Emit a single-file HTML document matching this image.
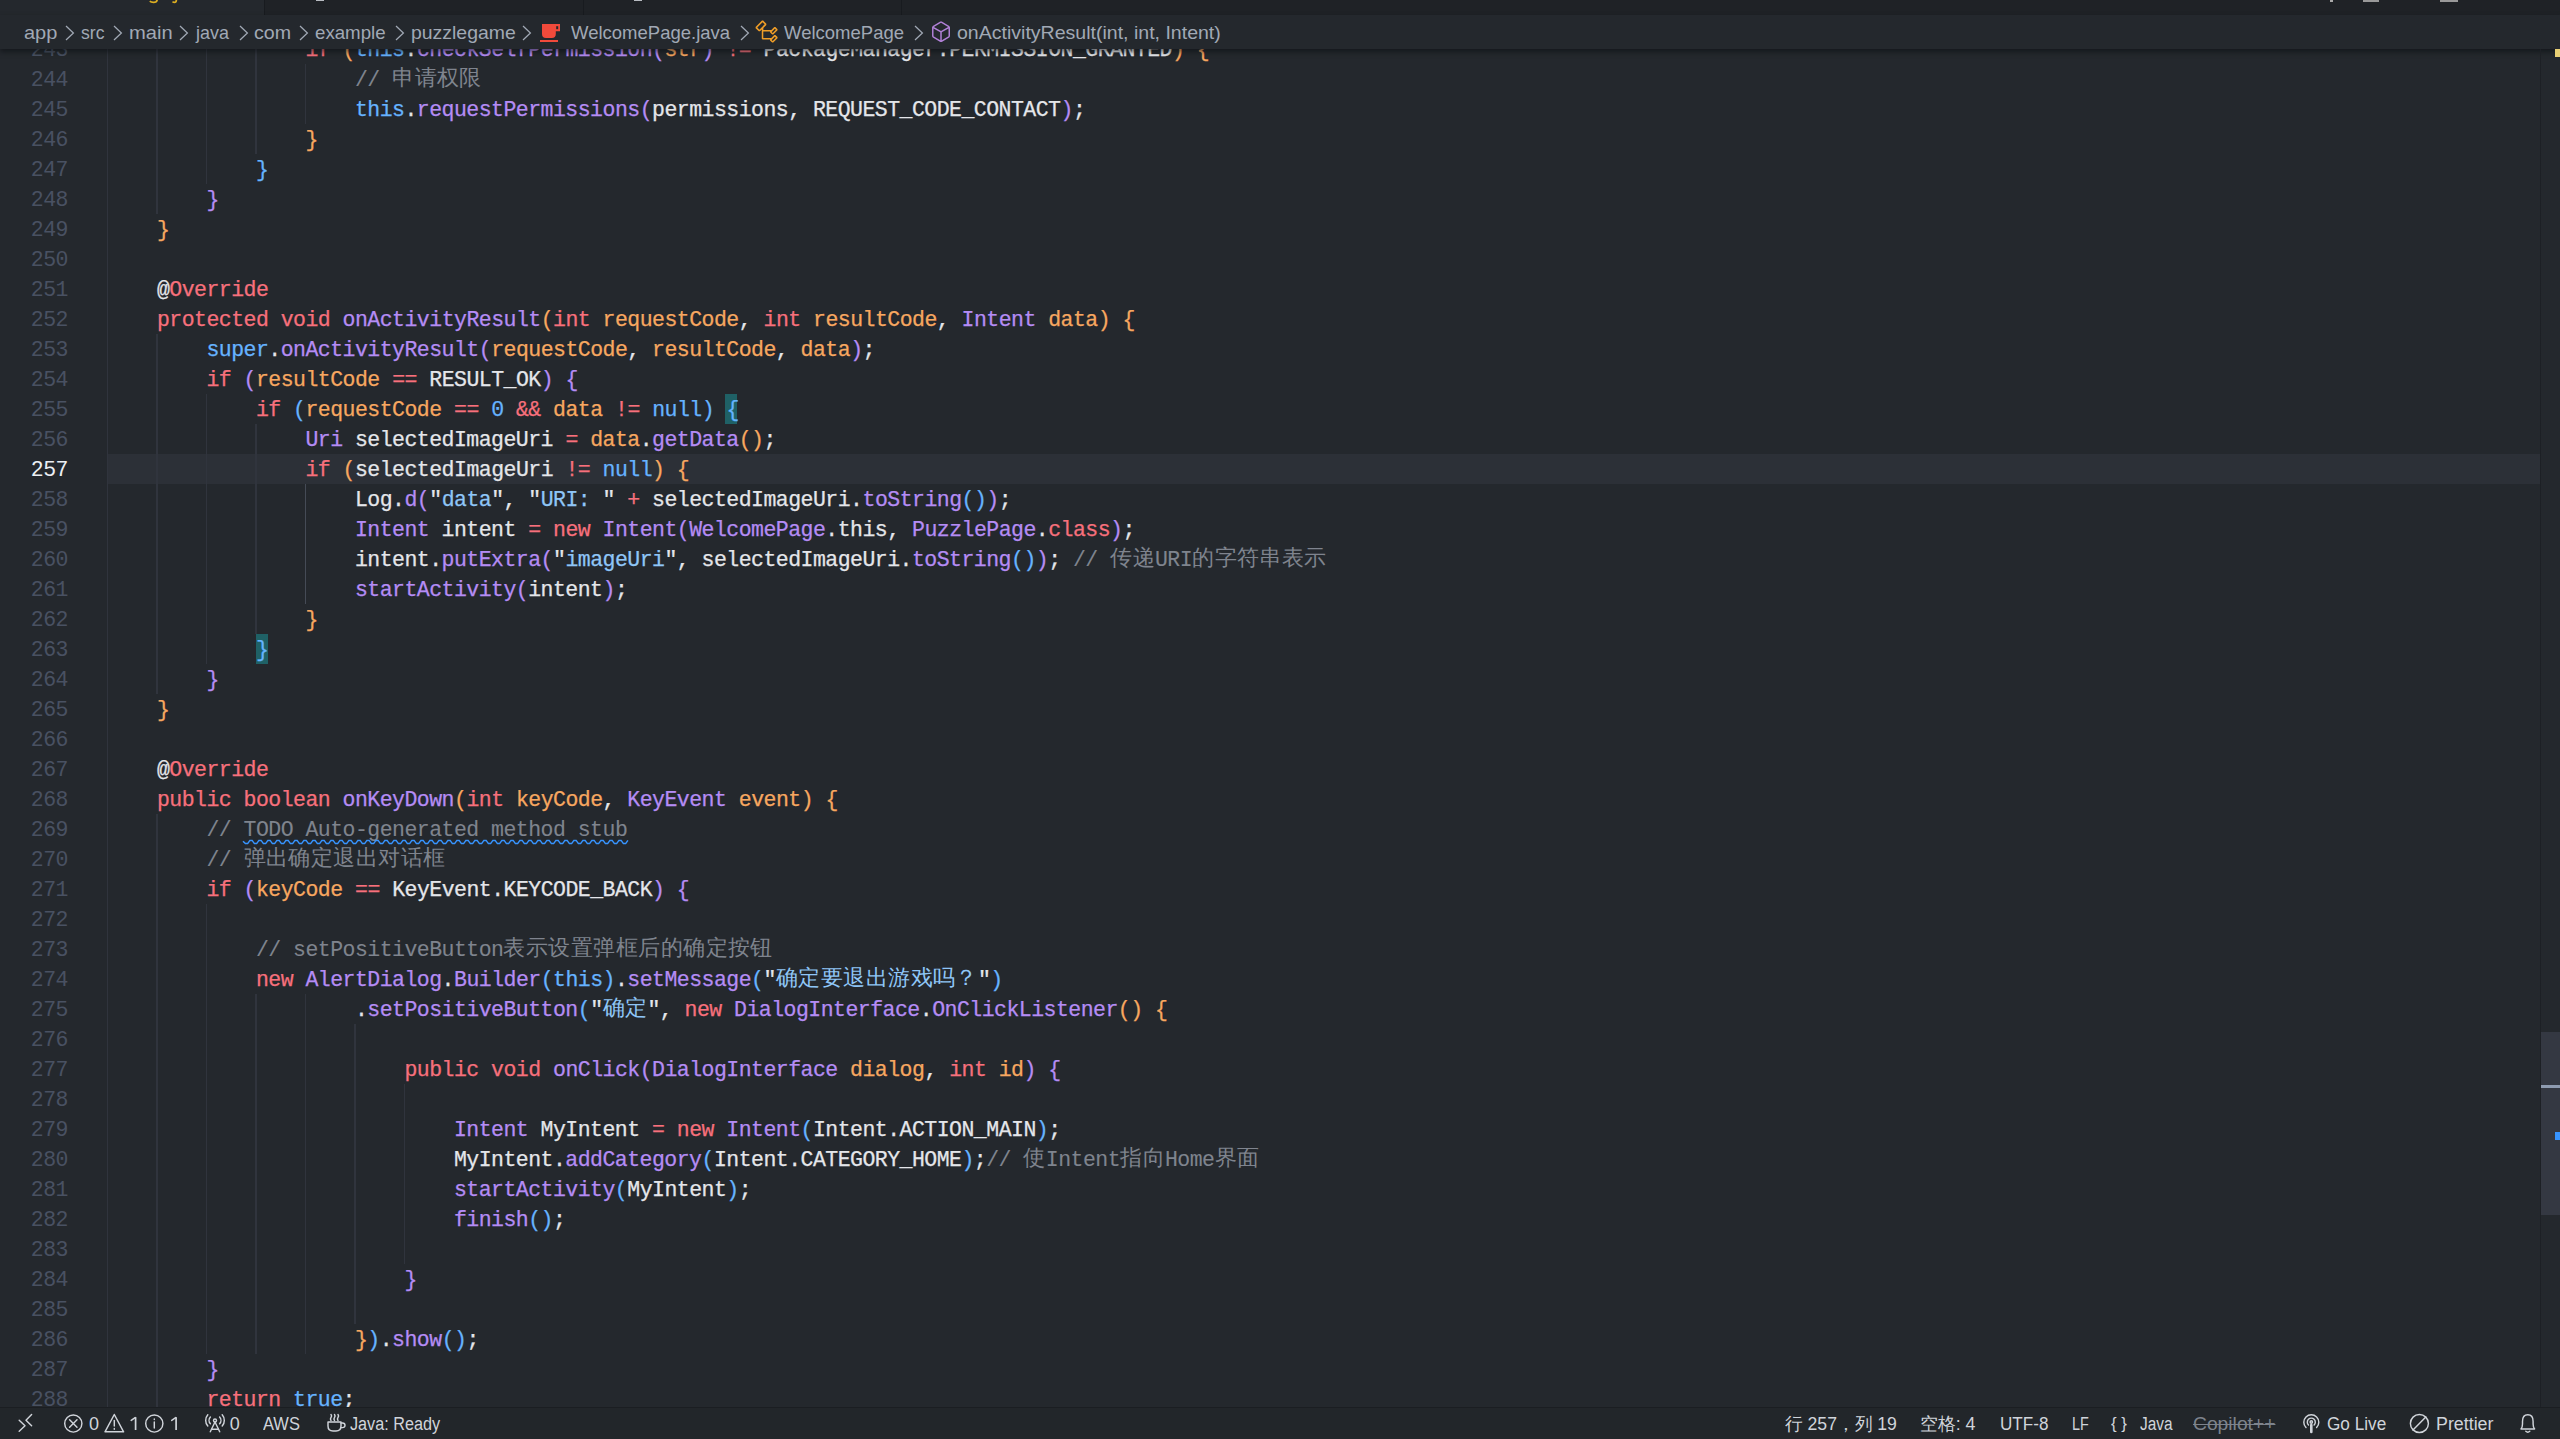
<!DOCTYPE html>
<html><head><meta charset="utf-8">
<style>
*{margin:0;padding:0;box-sizing:border-box}
html,body{width:2560px;height:1439px;overflow:hidden;background:#24282d}
body{position:relative;font-family:"Liberation Sans",sans-serif}
.abs{position:absolute}
#editor{position:absolute;left:0;top:0;width:2560px;height:1407px;overflow:hidden;background:#24282d}
.g{position:absolute;width:1.4px;height:30px;background:#30343d}
.ga{background:#454b56}
.curline{position:absolute;left:108px;width:2432px;height:30px;background:#2c3037}
.ln{position:absolute;left:0;width:68px;text-align:right;height:30px;line-height:32px;font-family:"Liberation Mono",monospace;font-size:21.5px;letter-spacing:-0.525px;color:#495162}
.ln.cur{color:#eceff4}
.cl{position:absolute;left:107.4px;height:30px;line-height:32px;white-space:pre;font-family:"Liberation Mono",monospace;font-size:21.5px;letter-spacing:-0.525px;color:#e4e6ea;-webkit-text-stroke:0.25px currentColor}
.cl b{font-weight:normal}
.cl i{font-style:normal;font-size:22.3px;font-weight:300;position:relative;top:-1px;letter-spacing:0.45px;-webkit-text-stroke:0}
.k{color:#f7707c}
.f{color:#b58cf5}
.b{color:#66b3ff}
.a{color:#f7a760}
.s{color:#8fc6f7}
.c{color:#7f848e;-webkit-text-stroke-width:0.1px}
.sq{color:#7f848e;-webkit-text-stroke-width:0.1px}
.hb{color:#66b3ff}
.bx{position:absolute;width:12px;height:30px;background:#1f6166}
#tabs{position:absolute;left:0;top:0;width:2560px;height:16px;background:#1f2226;border-bottom:1px solid #1b1e22}
#tab1{position:absolute;left:0;top:0;width:264px;height:15px;background:#24282d}
#bc{position:absolute;left:0;top:15px;width:2560px;height:34px;background:#24282d;color:#a1a9b5;font-size:19px;white-space:pre;box-shadow:0 3px 5px rgba(10,12,16,.55)}
#bc span{position:absolute;top:2.6px;line-height:30px;transform-origin:0 50%}
.chev{position:absolute;top:10px;width:10px;height:16px}
#vscroll{position:absolute;left:2540px;top:49px;width:20px;height:1358px;border-left:1px solid #1d2025}
#thumb{position:absolute;left:2541px;top:1032px;width:19px;height:183px;background:#343842}
#sb{position:absolute;left:0;top:1407px;width:2560px;height:32px;background:#22262a;border-top:1px solid #1b1e22;color:#d0d4da;font-size:18px;white-space:pre}
#sb span{position:absolute;top:3px;line-height:26px;transform-origin:0 50%}
#sb svg{position:absolute;top:6px}
</style></head><body>
<div id="editor">
<div class="curline" style="top:454px"></div>
<div class="bx" style="left:725px;top:394px"></div>
<div class="bx" style="left:256px;top:634px"></div>
<div class="g" style="left:106.70px;top:34px"></div>
<div class="g" style="left:156.20px;top:34px"></div>
<div class="g" style="left:205.70px;top:34px"></div>
<div class="g" style="left:255.20px;top:34px"></div>
<div class="g" style="left:106.70px;top:64px"></div>
<div class="g" style="left:156.20px;top:64px"></div>
<div class="g" style="left:205.70px;top:64px"></div>
<div class="g" style="left:255.20px;top:64px"></div>
<div class="g" style="left:304.70px;top:64px"></div>
<div class="g" style="left:106.70px;top:94px"></div>
<div class="g" style="left:156.20px;top:94px"></div>
<div class="g" style="left:205.70px;top:94px"></div>
<div class="g" style="left:255.20px;top:94px"></div>
<div class="g" style="left:304.70px;top:94px"></div>
<div class="g" style="left:106.70px;top:124px"></div>
<div class="g" style="left:156.20px;top:124px"></div>
<div class="g" style="left:205.70px;top:124px"></div>
<div class="g" style="left:255.20px;top:124px"></div>
<div class="g" style="left:106.70px;top:154px"></div>
<div class="g" style="left:156.20px;top:154px"></div>
<div class="g" style="left:205.70px;top:154px"></div>
<div class="g" style="left:106.70px;top:184px"></div>
<div class="g" style="left:156.20px;top:184px"></div>
<div class="g" style="left:106.70px;top:214px"></div>
<div class="g" style="left:106.70px;top:244px"></div>
<div class="g" style="left:106.70px;top:274px"></div>
<div class="g" style="left:106.70px;top:304px"></div>
<div class="g" style="left:106.70px;top:334px"></div>
<div class="g" style="left:156.20px;top:334px"></div>
<div class="g" style="left:106.70px;top:364px"></div>
<div class="g" style="left:156.20px;top:364px"></div>
<div class="g" style="left:106.70px;top:394px"></div>
<div class="g" style="left:156.20px;top:394px"></div>
<div class="g" style="left:205.70px;top:394px"></div>
<div class="g" style="left:106.70px;top:424px"></div>
<div class="g" style="left:156.20px;top:424px"></div>
<div class="g" style="left:205.70px;top:424px"></div>
<div class="g" style="left:255.20px;top:424px"></div>
<div class="g" style="left:106.70px;top:454px"></div>
<div class="g" style="left:156.20px;top:454px"></div>
<div class="g" style="left:205.70px;top:454px"></div>
<div class="g" style="left:255.20px;top:454px"></div>
<div class="g" style="left:106.70px;top:484px"></div>
<div class="g" style="left:156.20px;top:484px"></div>
<div class="g" style="left:205.70px;top:484px"></div>
<div class="g" style="left:255.20px;top:484px"></div>
<div class="g ga" style="left:304.70px;top:484px"></div>
<div class="g" style="left:106.70px;top:514px"></div>
<div class="g" style="left:156.20px;top:514px"></div>
<div class="g" style="left:205.70px;top:514px"></div>
<div class="g" style="left:255.20px;top:514px"></div>
<div class="g ga" style="left:304.70px;top:514px"></div>
<div class="g" style="left:106.70px;top:544px"></div>
<div class="g" style="left:156.20px;top:544px"></div>
<div class="g" style="left:205.70px;top:544px"></div>
<div class="g" style="left:255.20px;top:544px"></div>
<div class="g ga" style="left:304.70px;top:544px"></div>
<div class="g" style="left:106.70px;top:574px"></div>
<div class="g" style="left:156.20px;top:574px"></div>
<div class="g" style="left:205.70px;top:574px"></div>
<div class="g" style="left:255.20px;top:574px"></div>
<div class="g ga" style="left:304.70px;top:574px"></div>
<div class="g" style="left:106.70px;top:604px"></div>
<div class="g" style="left:156.20px;top:604px"></div>
<div class="g" style="left:205.70px;top:604px"></div>
<div class="g" style="left:255.20px;top:604px"></div>
<div class="g" style="left:106.70px;top:634px"></div>
<div class="g" style="left:156.20px;top:634px"></div>
<div class="g" style="left:205.70px;top:634px"></div>
<div class="g" style="left:106.70px;top:664px"></div>
<div class="g" style="left:156.20px;top:664px"></div>
<div class="g" style="left:106.70px;top:694px"></div>
<div class="g" style="left:106.70px;top:724px"></div>
<div class="g" style="left:106.70px;top:754px"></div>
<div class="g" style="left:106.70px;top:784px"></div>
<div class="g" style="left:106.70px;top:814px"></div>
<div class="g" style="left:156.20px;top:814px"></div>
<div class="g" style="left:106.70px;top:844px"></div>
<div class="g" style="left:156.20px;top:844px"></div>
<div class="g" style="left:106.70px;top:874px"></div>
<div class="g" style="left:156.20px;top:874px"></div>
<div class="g" style="left:106.70px;top:904px"></div>
<div class="g" style="left:156.20px;top:904px"></div>
<div class="g" style="left:205.70px;top:904px"></div>
<div class="g" style="left:106.70px;top:934px"></div>
<div class="g" style="left:156.20px;top:934px"></div>
<div class="g" style="left:205.70px;top:934px"></div>
<div class="g" style="left:106.70px;top:964px"></div>
<div class="g" style="left:156.20px;top:964px"></div>
<div class="g" style="left:205.70px;top:964px"></div>
<div class="g" style="left:106.70px;top:994px"></div>
<div class="g" style="left:156.20px;top:994px"></div>
<div class="g" style="left:205.70px;top:994px"></div>
<div class="g" style="left:255.20px;top:994px"></div>
<div class="g" style="left:304.70px;top:994px"></div>
<div class="g" style="left:106.70px;top:1024px"></div>
<div class="g" style="left:156.20px;top:1024px"></div>
<div class="g" style="left:205.70px;top:1024px"></div>
<div class="g" style="left:255.20px;top:1024px"></div>
<div class="g" style="left:304.70px;top:1024px"></div>
<div class="g" style="left:354.20px;top:1024px"></div>
<div class="g" style="left:106.70px;top:1054px"></div>
<div class="g" style="left:156.20px;top:1054px"></div>
<div class="g" style="left:205.70px;top:1054px"></div>
<div class="g" style="left:255.20px;top:1054px"></div>
<div class="g" style="left:304.70px;top:1054px"></div>
<div class="g" style="left:354.20px;top:1054px"></div>
<div class="g" style="left:106.70px;top:1084px"></div>
<div class="g" style="left:156.20px;top:1084px"></div>
<div class="g" style="left:205.70px;top:1084px"></div>
<div class="g" style="left:255.20px;top:1084px"></div>
<div class="g" style="left:304.70px;top:1084px"></div>
<div class="g" style="left:354.20px;top:1084px"></div>
<div class="g" style="left:403.70px;top:1084px"></div>
<div class="g" style="left:106.70px;top:1114px"></div>
<div class="g" style="left:156.20px;top:1114px"></div>
<div class="g" style="left:205.70px;top:1114px"></div>
<div class="g" style="left:255.20px;top:1114px"></div>
<div class="g" style="left:304.70px;top:1114px"></div>
<div class="g" style="left:354.20px;top:1114px"></div>
<div class="g" style="left:403.70px;top:1114px"></div>
<div class="g" style="left:106.70px;top:1144px"></div>
<div class="g" style="left:156.20px;top:1144px"></div>
<div class="g" style="left:205.70px;top:1144px"></div>
<div class="g" style="left:255.20px;top:1144px"></div>
<div class="g" style="left:304.70px;top:1144px"></div>
<div class="g" style="left:354.20px;top:1144px"></div>
<div class="g" style="left:403.70px;top:1144px"></div>
<div class="g" style="left:106.70px;top:1174px"></div>
<div class="g" style="left:156.20px;top:1174px"></div>
<div class="g" style="left:205.70px;top:1174px"></div>
<div class="g" style="left:255.20px;top:1174px"></div>
<div class="g" style="left:304.70px;top:1174px"></div>
<div class="g" style="left:354.20px;top:1174px"></div>
<div class="g" style="left:403.70px;top:1174px"></div>
<div class="g" style="left:106.70px;top:1204px"></div>
<div class="g" style="left:156.20px;top:1204px"></div>
<div class="g" style="left:205.70px;top:1204px"></div>
<div class="g" style="left:255.20px;top:1204px"></div>
<div class="g" style="left:304.70px;top:1204px"></div>
<div class="g" style="left:354.20px;top:1204px"></div>
<div class="g" style="left:403.70px;top:1204px"></div>
<div class="g" style="left:106.70px;top:1234px"></div>
<div class="g" style="left:156.20px;top:1234px"></div>
<div class="g" style="left:205.70px;top:1234px"></div>
<div class="g" style="left:255.20px;top:1234px"></div>
<div class="g" style="left:304.70px;top:1234px"></div>
<div class="g" style="left:354.20px;top:1234px"></div>
<div class="g" style="left:403.70px;top:1234px"></div>
<div class="g" style="left:106.70px;top:1264px"></div>
<div class="g" style="left:156.20px;top:1264px"></div>
<div class="g" style="left:205.70px;top:1264px"></div>
<div class="g" style="left:255.20px;top:1264px"></div>
<div class="g" style="left:304.70px;top:1264px"></div>
<div class="g" style="left:354.20px;top:1264px"></div>
<div class="g" style="left:106.70px;top:1294px"></div>
<div class="g" style="left:156.20px;top:1294px"></div>
<div class="g" style="left:205.70px;top:1294px"></div>
<div class="g" style="left:255.20px;top:1294px"></div>
<div class="g" style="left:304.70px;top:1294px"></div>
<div class="g" style="left:354.20px;top:1294px"></div>
<div class="g" style="left:106.70px;top:1324px"></div>
<div class="g" style="left:156.20px;top:1324px"></div>
<div class="g" style="left:205.70px;top:1324px"></div>
<div class="g" style="left:255.20px;top:1324px"></div>
<div class="g" style="left:304.70px;top:1324px"></div>
<div class="g" style="left:106.70px;top:1354px"></div>
<div class="g" style="left:156.20px;top:1354px"></div>
<div class="g" style="left:106.70px;top:1384px"></div>
<div class="g" style="left:156.20px;top:1384px"></div>
<div class="ln" style="top:34px">243</div>
<div class="cl" style="top:34px">                <b class="k">if</b> <b class="a">(</b><b class="b">this</b>.<b class="f">checkSelfPermission</b><b class="f">(</b><b class="a">str</b><b class="f">)</b> <b class="k">!=</b> PackageManager.PERMISSION_GRANTED<b class="a">)</b> <b class="a">{</b></div>
<div class="ln" style="top:64px">244</div>
<div class="cl" style="top:64px">                    <b class="c">// <i>申请权限</i></b></div>
<div class="ln" style="top:94px">245</div>
<div class="cl" style="top:94px">                    <b class="b">this</b>.<b class="f">requestPermissions</b><b class="f">(</b>permissions, REQUEST_CODE_CONTACT<b class="f">)</b>;</div>
<div class="ln" style="top:124px">246</div>
<div class="cl" style="top:124px">                <b class="a">}</b></div>
<div class="ln" style="top:154px">247</div>
<div class="cl" style="top:154px">            <b class="b">}</b></div>
<div class="ln" style="top:184px">248</div>
<div class="cl" style="top:184px">        <b class="f">}</b></div>
<div class="ln" style="top:214px">249</div>
<div class="cl" style="top:214px">    <b class="a">}</b></div>
<div class="ln" style="top:244px">250</div>
<div class="ln" style="top:274px">251</div>
<div class="cl" style="top:274px">    @<b class="k">Override</b></div>
<div class="ln" style="top:304px">252</div>
<div class="cl" style="top:304px">    <b class="k">protected</b> <b class="k">void</b> <b class="f">onActivityResult</b><b class="a">(</b><b class="k">int</b> <b class="a">requestCode</b>, <b class="k">int</b> <b class="a">resultCode</b>, <b class="f">Intent</b> <b class="a">data</b><b class="a">)</b> <b class="a">{</b></div>
<div class="ln" style="top:334px">253</div>
<div class="cl" style="top:334px">        <b class="b">super</b>.<b class="f">onActivityResult</b><b class="f">(</b><b class="a">requestCode</b>, <b class="a">resultCode</b>, <b class="a">data</b><b class="f">)</b>;</div>
<div class="ln" style="top:364px">254</div>
<div class="cl" style="top:364px">        <b class="k">if</b> <b class="f">(</b><b class="a">resultCode</b> <b class="k">==</b> RESULT_OK<b class="f">)</b> <b class="f">{</b></div>
<div class="ln" style="top:394px">255</div>
<div class="cl" style="top:394px">            <b class="k">if</b> <b class="b">(</b><b class="a">requestCode</b> <b class="k">==</b> <b class="b">0</b> <b class="k">&amp;&amp;</b> <b class="a">data</b> <b class="k">!=</b> <b class="b">null</b><b class="b">)</b> <b class="hb">{</b></div>
<div class="ln" style="top:424px">256</div>
<div class="cl" style="top:424px">                <b class="f">Uri</b> selectedImageUri <b class="k">=</b> <b class="a">data</b>.<b class="f">getData</b><b class="a">()</b>;</div>
<div class="ln cur" style="top:454px">257</div>
<div class="cl" style="top:454px">                <b class="k">if</b> <b class="a">(</b>selectedImageUri <b class="k">!=</b> <b class="b">null</b><b class="a">)</b> <b class="a">{</b></div>
<div class="ln" style="top:484px">258</div>
<div class="cl" style="top:484px">                    Log.<b class="f">d</b><b class="f">(</b>"<b class="s">data</b>", "<b class="s">URI: </b>" <b class="k">+</b> selectedImageUri.<b class="f">toString</b><b class="b">()</b><b class="f">)</b>;</div>
<div class="ln" style="top:514px">259</div>
<div class="cl" style="top:514px">                    <b class="f">Intent</b> intent <b class="k">=</b> <b class="k">new</b> <b class="f">Intent</b><b class="f">(</b><b class="f">WelcomePage</b>.this, <b class="f">PuzzlePage</b>.<b class="k">class</b><b class="f">)</b>;</div>
<div class="ln" style="top:544px">260</div>
<div class="cl" style="top:544px">                    intent.<b class="f">putExtra</b><b class="f">(</b>"<b class="s">imageUri</b>", selectedImageUri.<b class="f">toString</b><b class="b">()</b><b class="f">)</b>; <b class="c">// <i>传递</i>URI<i>的字符串表示</i></b></div>
<div class="ln" style="top:574px">261</div>
<div class="cl" style="top:574px">                    <b class="f">startActivity</b><b class="f">(</b>intent<b class="f">)</b>;</div>
<div class="ln" style="top:604px">262</div>
<div class="cl" style="top:604px">                <b class="a">}</b></div>
<div class="ln" style="top:634px">263</div>
<div class="cl" style="top:634px">            <b class="hb">}</b></div>
<div class="ln" style="top:664px">264</div>
<div class="cl" style="top:664px">        <b class="f">}</b></div>
<div class="ln" style="top:694px">265</div>
<div class="cl" style="top:694px">    <b class="a">}</b></div>
<div class="ln" style="top:724px">266</div>
<div class="ln" style="top:754px">267</div>
<div class="cl" style="top:754px">    @<b class="k">Override</b></div>
<div class="ln" style="top:784px">268</div>
<div class="cl" style="top:784px">    <b class="k">public</b> <b class="k">boolean</b> <b class="f">onKeyDown</b><b class="a">(</b><b class="k">int</b> <b class="a">keyCode</b>, <b class="f">KeyEvent</b> <b class="a">event</b><b class="a">)</b> <b class="a">{</b></div>
<div class="ln" style="top:814px">269</div>
<div class="cl" style="top:814px">        <b class="c">// </b><b class="sq">TODO Auto-generated method stub</b></div>
<div class="ln" style="top:844px">270</div>
<div class="cl" style="top:844px">        <b class="c">// <i>弹出确定退出对话框</i></b></div>
<div class="ln" style="top:874px">271</div>
<div class="cl" style="top:874px">        <b class="k">if</b> <b class="f">(</b><b class="a">keyCode</b> <b class="k">==</b> KeyEvent.KEYCODE_BACK<b class="f">)</b> <b class="f">{</b></div>
<div class="ln" style="top:904px">272</div>
<div class="ln" style="top:934px">273</div>
<div class="cl" style="top:934px">            <b class="c">// setPositiveButton<i>表示设置弹框后的确定按钮</i></b></div>
<div class="ln" style="top:964px">274</div>
<div class="cl" style="top:964px">            <b class="k">new</b> <b class="f">AlertDialog</b>.<b class="f">Builder</b><b class="b">(</b><b class="b">this</b><b class="b">)</b>.<b class="f">setMessage</b><b class="b">(</b>"<b class="s"><i>确定要退出游戏吗？</i></b>"<b class="b">)</b></div>
<div class="ln" style="top:994px">275</div>
<div class="cl" style="top:994px">                    .<b class="f">setPositiveButton</b><b class="b">(</b>"<b class="s"><i>确定</i></b>", <b class="k">new</b> <b class="f">DialogInterface</b>.<b class="f">OnClickListener</b><b class="a">()</b> <b class="a">{</b></div>
<div class="ln" style="top:1024px">276</div>
<div class="ln" style="top:1054px">277</div>
<div class="cl" style="top:1054px">                        <b class="k">public</b> <b class="k">void</b> <b class="f">onClick</b><b class="f">(</b><b class="f">DialogInterface</b> <b class="a">dialog</b>, <b class="k">int</b> <b class="a">id</b><b class="f">)</b> <b class="f">{</b></div>
<div class="ln" style="top:1084px">278</div>
<div class="ln" style="top:1114px">279</div>
<div class="cl" style="top:1114px">                            <b class="f">Intent</b> MyIntent <b class="k">=</b> <b class="k">new</b> <b class="f">Intent</b><b class="b">(</b>Intent.ACTION_MAIN<b class="b">)</b>;</div>
<div class="ln" style="top:1144px">280</div>
<div class="cl" style="top:1144px">                            MyIntent.<b class="f">addCategory</b><b class="b">(</b>Intent.CATEGORY_HOME<b class="b">)</b>;<b class="c">// <i>使</i>Intent<i>指向</i>Home<i>界面</i></b></div>
<div class="ln" style="top:1174px">281</div>
<div class="cl" style="top:1174px">                            <b class="f">startActivity</b><b class="b">(</b>MyIntent<b class="b">)</b>;</div>
<div class="ln" style="top:1204px">282</div>
<div class="cl" style="top:1204px">                            <b class="f">finish</b><b class="b">()</b>;</div>
<div class="ln" style="top:1234px">283</div>
<div class="ln" style="top:1264px">284</div>
<div class="cl" style="top:1264px">                        <b class="f">}</b></div>
<div class="ln" style="top:1294px">285</div>
<div class="ln" style="top:1324px">286</div>
<div class="cl" style="top:1324px">                    <b class="a">}</b><b class="b">)</b>.<b class="f">show</b><b class="b">()</b>;</div>
<div class="ln" style="top:1354px">287</div>
<div class="cl" style="top:1354px">        <b class="f">}</b></div>
<div class="ln" style="top:1384px">288</div>
<div class="cl" style="top:1384px">        <b class="k">return</b> <b class="b">true</b>;</div>
<svg class="abs" style="left:240px;top:836px" width="392" height="12" viewBox="240 836 392 12"><polyline points="243.00,841.2 245.40,843.60 247.65,843.60 249.90,840.40 252.15,840.40 254.40,843.60 256.65,843.60 258.90,840.40 261.15,840.40 263.40,843.60 265.65,843.60 267.90,840.40 270.15,840.40 272.40,843.60 274.65,843.60 276.90,840.40 279.15,840.40 281.40,843.60 283.65,843.60 285.90,840.40 288.15,840.40 290.40,843.60 292.65,843.60 294.90,840.40 297.15,840.40 299.40,843.60 301.65,843.60 303.90,840.40 306.15,840.40 308.40,843.60 310.65,843.60 312.90,840.40 315.15,840.40 317.40,843.60 319.65,843.60 321.90,840.40 324.15,840.40 326.40,843.60 328.65,843.60 330.90,840.40 333.15,840.40 335.40,843.60 337.65,843.60 339.90,840.40 342.15,840.40 344.40,843.60 346.65,843.60 348.90,840.40 351.15,840.40 353.40,843.60 355.65,843.60 357.90,840.40 360.15,840.40 362.40,843.60 364.65,843.60 366.90,840.40 369.15,840.40 371.40,843.60 373.65,843.60 375.90,840.40 378.15,840.40 380.40,843.60 382.65,843.60 384.90,840.40 387.15,840.40 389.40,843.60 391.65,843.60 393.90,840.40 396.15,840.40 398.40,843.60 400.65,843.60 402.90,840.40 405.15,840.40 407.40,843.60 409.65,843.60 411.90,840.40 414.15,840.40 416.40,843.60 418.65,843.60 420.90,840.40 423.15,840.40 425.40,843.60 427.65,843.60 429.90,840.40 432.15,840.40 434.40,843.60 436.65,843.60 438.90,840.40 441.15,840.40 443.40,843.60 445.65,843.60 447.90,840.40 450.15,840.40 452.40,843.60 454.65,843.60 456.90,840.40 459.15,840.40 461.40,843.60 463.65,843.60 465.90,840.40 468.15,840.40 470.40,843.60 472.65,843.60 474.90,840.40 477.15,840.40 479.40,843.60 481.65,843.60 483.90,840.40 486.15,840.40 488.40,843.60 490.65,843.60 492.90,840.40 495.15,840.40 497.40,843.60 499.65,843.60 501.90,840.40 504.15,840.40 506.40,843.60 508.65,843.60 510.90,840.40 513.15,840.40 515.40,843.60 517.65,843.60 519.90,840.40 522.15,840.40 524.40,843.60 526.65,843.60 528.90,840.40 531.15,840.40 533.40,843.60 535.65,843.60 537.90,840.40 540.15,840.40 542.40,843.60 544.65,843.60 546.90,840.40 549.15,840.40 551.40,843.60 553.65,843.60 555.90,840.40 558.15,840.40 560.40,843.60 562.65,843.60 564.90,840.40 567.15,840.40 569.40,843.60 571.65,843.60 573.90,840.40 576.15,840.40 578.40,843.60 580.65,843.60 582.90,840.40 585.15,840.40 587.40,843.60 589.65,843.60 591.90,840.40 594.15,840.40 596.40,843.60 598.65,843.60 600.90,840.40 603.15,840.40 605.40,843.60 607.65,843.60 609.90,840.40 612.15,840.40 614.40,843.60 616.65,843.60 618.90,840.40 621.15,840.40 623.40,843.60 625.65,843.60 627.90,840.40" fill="none" stroke="#3794ff" stroke-width="1.5" stroke-linejoin="miter"/></svg>
</div>
<div id="tabs"><div id="tab1"></div>
<div class="abs" style="left:264px;top:0;width:1px;height:15px;background:#181b1f"></div>
<div class="abs" style="left:583px;top:0;width:1px;height:15px;background:#181b1f"></div>
<div class="abs" style="left:901px;top:0;width:1px;height:15px;background:#181b1f"></div>
<svg class="abs" style="left:145px;top:0" width="40" height="6" viewBox="145 0 40 6"><path d="M149.8 1.2 Q151 2.4 153.5 2.4 Q157 2.4 157.2 -0.5" fill="none" stroke="#dcae22" stroke-width="1.7"/><path d="M172.5 1.6 Q173.5 2.4 174.5 2.4 Q176.4 2.4 176.4 -0.5" fill="none" stroke="#dcae22" stroke-width="1.7"/></svg>

<div class="abs" style="left:316px;top:0;width:8px;height:1px;background:#b8bcc2"></div>
<div class="abs" style="left:634px;top:0;width:8px;height:1px;background:#b8bcc2"></div>
<div class="abs" style="left:2330px;top:0;width:3px;height:2px;background:#aaa"></div>
<div class="abs" style="left:2363px;top:0;width:16px;height:2px;background:#999"></div>
<div class="abs" style="left:2440px;top:0;width:18px;height:2px;background:#999"></div>
</div>
<div id="bc">
<span style="left:24.3px;transform:scaleX(1.052)">app</span>
<span style="left:81.2px;transform:scaleX(0.925)">src</span>
<span style="left:129.3px;transform:scaleX(1.061)">main</span>
<span style="left:195.5px;transform:scaleX(0.944)">java</span>
<span style="left:254.0px;transform:scaleX(1.032)">com</span>
<span style="left:315.0px;transform:scaleX(0.983)">example</span>
<span style="left:410.5px;transform:scaleX(1.022)">puzzlegame</span>
<span style="left:571.0px;transform:scaleX(0.974)">WelcomePage.java</span>
<span style="left:784.0px;transform:scaleX(0.974)">WelcomePage</span>
<span style="left:957.0px;transform:scaleX(1.028)">onActivityResult(int, int, Intent)</span>
<svg class="chev" style="left:65.0px" viewBox="0 0 10 16"><polyline points="1,1 8.4,8 1,15" fill="none" stroke="#a1a9b5" stroke-width="1.25"/></svg>
<svg class="chev" style="left:113.0px" viewBox="0 0 10 16"><polyline points="1,1 8.4,8 1,15" fill="none" stroke="#a1a9b5" stroke-width="1.25"/></svg>
<svg class="chev" style="left:179.3px" viewBox="0 0 10 16"><polyline points="1,1 8.4,8 1,15" fill="none" stroke="#a1a9b5" stroke-width="1.25"/></svg>
<svg class="chev" style="left:238.8px" viewBox="0 0 10 16"><polyline points="1,1 8.4,8 1,15" fill="none" stroke="#a1a9b5" stroke-width="1.25"/></svg>
<svg class="chev" style="left:298.8px" viewBox="0 0 10 16"><polyline points="1,1 8.4,8 1,15" fill="none" stroke="#a1a9b5" stroke-width="1.25"/></svg>
<svg class="chev" style="left:394.8px" viewBox="0 0 10 16"><polyline points="1,1 8.4,8 1,15" fill="none" stroke="#a1a9b5" stroke-width="1.25"/></svg>
<svg class="chev" style="left:521.8px" viewBox="0 0 10 16"><polyline points="1,1 8.4,8 1,15" fill="none" stroke="#a1a9b5" stroke-width="1.25"/></svg>
<svg class="chev" style="left:739.8px" viewBox="0 0 10 16"><polyline points="1,1 8.4,8 1,15" fill="none" stroke="#a1a9b5" stroke-width="1.25"/></svg>
<svg class="chev" style="left:913.8px" viewBox="0 0 10 16"><polyline points="1,1 8.4,8 1,15" fill="none" stroke="#a1a9b5" stroke-width="1.25"/></svg>
<svg class="abs" style="left:538px;top:7px" width="24" height="22" viewBox="538 22 24 22"><path d="M542 24 H560 V31.3 H555.8 V34 Q555.8 38 551.8 38 H546 Q542 38 542 34 Z" fill="#f14a3b"/><rect x="556.2" y="26.2" width="2" height="3" fill="#24282d"/><rect x="540" y="40" width="18" height="2" fill="#f14a3b"/></svg>
<svg class="abs" style="left:754.4px;top:4.4px" width="25.6" height="25.6" viewBox="0 0 16 16"><path fill="#ee9d28" d="M11.34 9.71h.71l2.67-2.67v-.71L13.38 5h-.7l-1.82 1.81h-5V5.56l1.86-1.85V3l-2-2H5L1 5v.71l2 2h.71l1.14-1.15v5.79l.5.5H10v.52l1.33 1.34h.71l2.67-2.67v-.71L13.37 10h-.7l-1.86 1.85h-5v-4H10v.48l1.34 1.38zm1.69-3.65l.63.63-2 2-.63-.63 2-2zm0 5l.63.63-2 2-.63-.63 2-2zM3.35 6.65l-1.29-1.3 3.29-3.29 1.3 1.29-3.3 3.3z"/></svg>
<svg class="abs" style="left:929px;top:4.5px" width="24" height="24" viewBox="0 0 16 16"><path fill="#b180d7" d="M13.51 4l-5-3h-1l-5 3-.49.86v6l.49.85 5 3h1l5-3 .49-.85v-6L13.51 4zm-6 9.56l-4.5-2.7V5.7l4.5 2.45v5.41zM3.27 4.7l4.74-2.84 4.74 2.84-4.74 2.59L3.27 4.7zm9.74 6.16l-4.5 2.7V8.15l4.5-2.45v5.16z"/></svg>
</div>
<div id="vscroll"></div>
<div id="thumb"></div>
<div class="abs" style="left:2541px;top:1085px;width:19px;height:3px;background:#8e9bb0"></div>
<div class="abs" style="left:2555px;top:1132px;width:5px;height:8px;background:#3794ff"></div>
<div class="abs" style="left:2555px;top:49px;width:5px;height:8px;background:#e8cf74"></div>
<div id="sb">
<svg style="left:16.0px;top:4.0px" width="20.0" height="22.0" viewBox="16.0 1412.0 20.0 22.0" fill="none" stroke="#d0d4da" stroke-width="1.45" stroke-linecap="round" stroke-linejoin="round"><polyline points="19.2,1420.3 25,1425.8 19.2,1431.2"/><polyline points="31.6,1414.6 26,1420.2 31.6,1425.8"/></svg>
<svg style="left:62.0px;top:4.0px" width="24.0" height="24.0" viewBox="62.0 1412.0 24.0 24.0" fill="none" stroke="#d0d4da" stroke-width="1.45" stroke-linecap="round" stroke-linejoin="round"><circle cx="73.3" cy="1423.5" r="8.6"/><line x1="69.6" y1="1419.8" x2="77" y2="1427.2"/><line x1="77" y1="1419.8" x2="69.6" y2="1427.2"/></svg>
<span style="left:89.0px;transform:scaleX(1.000);">0</span>
<svg style="left:102.0px;top:3.0px" width="24.0" height="24.0" viewBox="102.0 1411.0 24.0 24.0" fill="none" stroke="#d0d4da" stroke-width="1.45" stroke-linecap="round" stroke-linejoin="round"><path d="M114.3 1414.5 L123.6 1431.8 H105 Z"/><line x1="114.3" y1="1420.5" x2="114.3" y2="1426"/><line x1="114.3" y1="1428.5" x2="114.3" y2="1429.2"/></svg>
<svg style="left:128.0px;top:6.0px" width="12.0" height="20.0" viewBox="128.0 1414.0 12.0 20.0" fill="none" stroke="#d0d4da" stroke-width="1.45" stroke-linecap="round" stroke-linejoin="round"><path d="M135.6 1417.2 V1430" stroke-width="1.7" stroke-linecap="butt"/><path d="M135.2 1417.6 L131.2 1420.4" stroke-width="1.5"/></svg>
<svg style="left:143.0px;top:4.0px" width="24.0" height="24.0" viewBox="143.0 1412.0 24.0 24.0" fill="none" stroke="#d0d4da" stroke-width="1.45" stroke-linecap="round" stroke-linejoin="round"><circle cx="154.3" cy="1423.5" r="8.6"/><line x1="154.3" y1="1422" x2="154.3" y2="1428"/><line x1="154.3" y1="1419" x2="154.3" y2="1419.6"/></svg>
<svg style="left:168.0px;top:6.0px" width="12.0" height="20.0" viewBox="168.0 1414.0 12.0 20.0" fill="none" stroke="#d0d4da" stroke-width="1.45" stroke-linecap="round" stroke-linejoin="round"><path d="M176.1 1417.2 V1430" stroke-width="1.7" stroke-linecap="butt"/><path d="M175.7 1417.6 L171.7 1420.4" stroke-width="1.5"/></svg>
<svg style="left:203.0px;top:3.0px" width="24.0" height="24.0" viewBox="203.0 1411.0 24.0 24.0" fill="none" stroke="#d0d4da" stroke-width="1.45" stroke-linecap="round" stroke-linejoin="round"><circle cx="215" cy="1420.4" r="1.5"/><path d="M210.4 1417 a5 5 0 0 0 0 6.8"/><path d="M219.6 1417 a5 5 0 0 1 0 6.8"/><path d="M207.8 1414.8 a8.5 8.5 0 0 0 0 11.2"/><path d="M222.2 1414.8 a8.5 8.5 0 0 1 0 11.2"/><polyline points="210.3,1431.8 215,1422 219.7,1431.8"/><line x1="211.6" y1="1429.3" x2="218.4" y2="1429.3"/></svg>
<span style="left:229.8px;transform:scaleX(1.000);">0</span>
<span style="left:263.3px;transform:scaleX(0.915);">AWS</span>
<svg style="left:324.0px;top:4.0px" width="24.0" height="22.0" viewBox="324.0 1412.0 24.0 22.0" fill="none" stroke="#d0d4da" stroke-width="1.45" stroke-linecap="round" stroke-linejoin="round"><path d="M328 1422 H341 V1426 Q341 1431 336 1431 H333 Q328 1431 328 1426 Z"/><path d="M341 1423 H342.5 Q345 1423 345 1425.3 Q345 1427.6 342.5 1427.6 H341"/><path d="M331 1414.5 q1.2 1.5 0 3 q-1.2 1.5 0 3"/><path d="M334.5 1414.5 q1.2 1.5 0 3 q-1.2 1.5 0 3"/><path d="M338 1414.5 q1.2 1.5 0 3 q-1.2 1.5 0 3"/></svg>
<span style="left:350.0px;transform:scaleX(0.900);">Java: Ready</span>
<span style="left:1785.0px;transform:scaleX(0.980);">行 257，列 19</span>
<span style="left:1920.0px;transform:scaleX(0.990);">空格: 4</span>
<span style="left:1999.5px;transform:scaleX(0.950);">UTF-8</span>
<span style="left:2071.5px;transform:scaleX(0.800);">LF</span>
<span style="left:2111.0px;transform:scaleX(1.050);font-size:16px;top:2.5px">{ }</span>
<span style="left:2140.0px;transform:scaleX(0.855);">Java</span>
<span style="left:2193.0px;transform:scaleX(1.070);color:#7d838c;text-decoration:line-through">Copilot++</span>
<svg style="left:2300.0px;top:3.0px" width="22.0" height="24.0" viewBox="2300.0 1411.0 22.0 24.0" fill="none" stroke="#d0d4da" stroke-width="1.45" stroke-linecap="round" stroke-linejoin="round"><path d="M2306 1427.5 a7.5 7.5 0 1 1 10.6 0"/><path d="M2308.5 1425 a4 4 0 1 1 5.6 0"/><circle cx="2311.3" cy="1422" r="1.2"/><line x1="2311.3" y1="1425" x2="2311.3" y2="1432" stroke-width="2.6"/></svg>
<span style="left:2326.5px;transform:scaleX(0.955);">Go Live</span>
<svg style="left:2407.0px;top:3.0px" width="24.0" height="24.0" viewBox="2407.0 1411.0 24.0 24.0" fill="none" stroke="#d0d4da" stroke-width="1.45" stroke-linecap="round" stroke-linejoin="round"><circle cx="2419.4" cy="1423.5" r="9"/><line x1="2413" y1="1430" x2="2425.8" y2="1417"/></svg>
<span style="left:2435.5px;transform:scaleX(0.990);">Prettier</span>
<svg style="left:2516.0px;top:3.0px" width="24.0" height="24.0" viewBox="2516.0 1411.0 24.0 24.0" fill="none" stroke="#d0d4da" stroke-width="1.45" stroke-linecap="round" stroke-linejoin="round"><path d="M2521 1429 Q2522.5 1427 2522.5 1424 V1421.5 Q2522.5 1414.8 2527.8 1414.8 Q2533.1 1414.8 2533.1 1421.5 V1424 Q2533.1 1427 2534.6 1429 Z"/><path d="M2525.8 1431.3 Q2527.8 1433 2529.8 1431.3"/></svg>
</div>
</body></html>
